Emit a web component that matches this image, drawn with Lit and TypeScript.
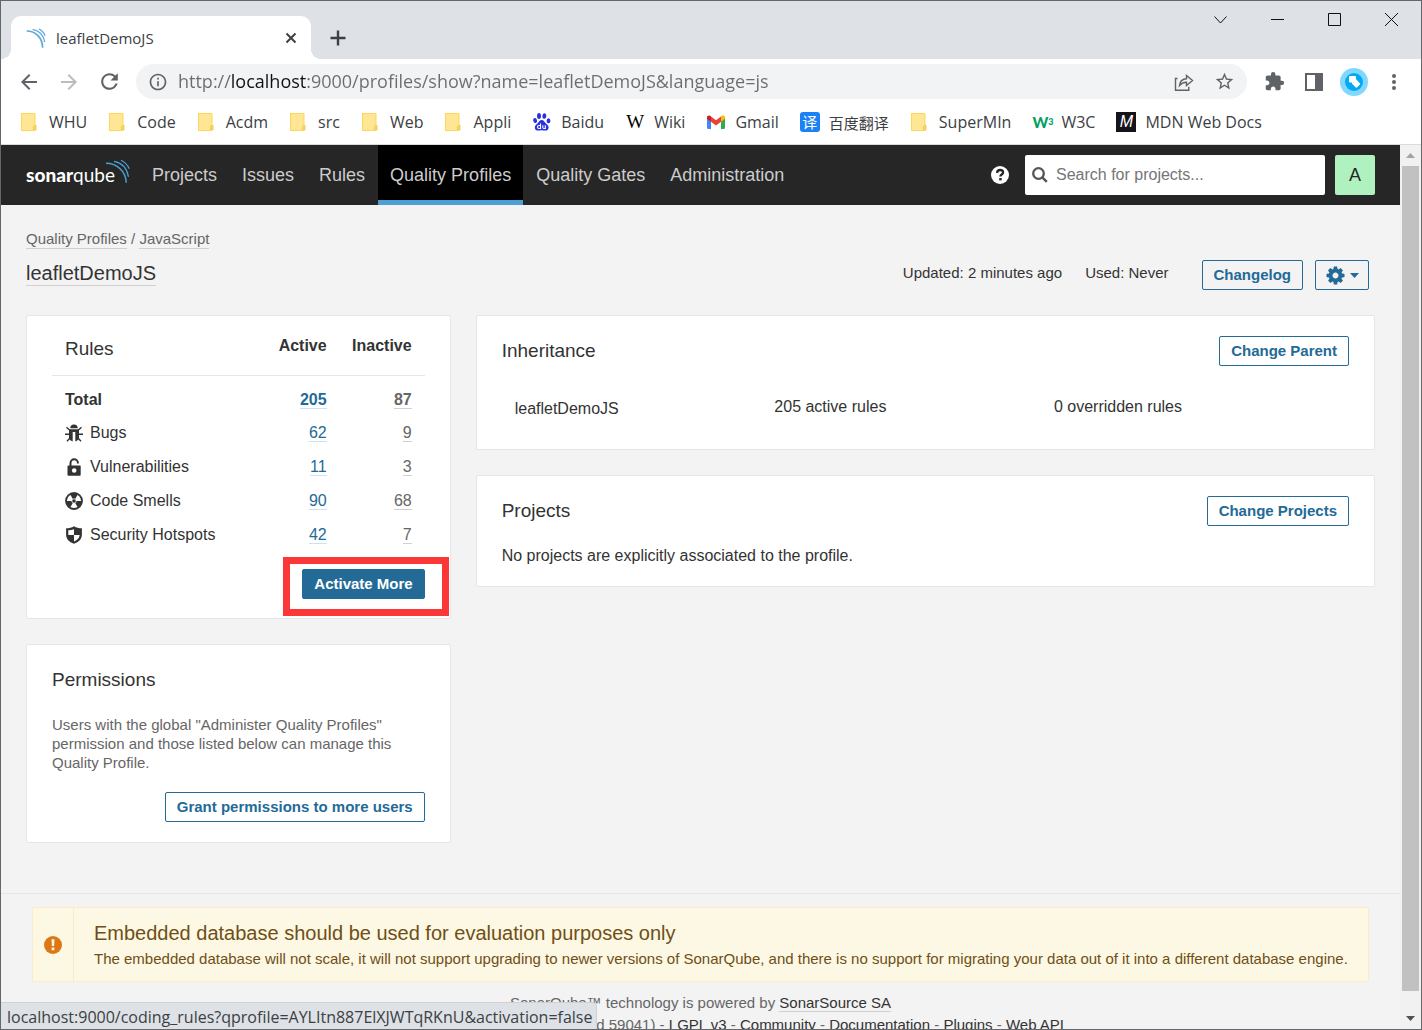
import { LitElement, html, css, svg, nothing, TemplateResult } from "lit";
import { customElement } from "lit/decorators.js";
import { classMap } from "lit/directives/class-map.js";

const folderIcon = svg`<svg width="20" height="20" viewBox="0 0 20 20" aria-hidden="true">
  <rect x="1" y="1" width="14" height="18" rx="1" fill="#ffe694"/>
  <path d="M1.500 2v16.500h12M1 1.500h14v12" fill="none" stroke="#fbd75b" />
  <path d="M14.500 13.500h1.500v4.500h-2.500v-3z" fill="#fbdc6c" stroke="#efc23c" stroke-width=".8"/>
</svg>`;

const baiduIcon = svg`<svg width="20" height="20" viewBox="0 0 20 20" aria-hidden="true">
  <g fill="#2932e1">
    <ellipse cx="7" cy="4" rx="2" ry="2.900"/><ellipse cx="12.300" cy="3.900" rx="2" ry="2.800" transform="rotate(8 12 4)"/>
    <ellipse cx="3" cy="8.500" rx="1.900" ry="2.600" transform="rotate(-15 3 8)"/><ellipse cx="16.500" cy="8.800" rx="1.900" ry="2.500"/>
    <path d="M9.700 8c2 0 2.600 1.600 3.800 2.900 1.300 1.400 3.300 2.500 3.100 4.800-.2 2.300-1.700 3-3.700 2.900-1.500-.1-2-.4-3.200-.4s-2 .4-3.400.4c-1.900 0-3.400-.8-3.500-2.900-.1-2.200 1.800-3.200 3.100-4.600C7.100 9.700 7.800 8 9.700 8z"/>
  </g>
  <path d="M8.500 11.500v5H7a1.500 1.500 0 0 1 0-3h1.500M10.800 13.300v2.300q0 .9 1 .9H13.300v-3.200" fill="none" stroke="#fff" stroke-width="1.100"/>
</svg>`;

const gmailIcon = svg`<svg width="20" height="20" viewBox="0 0 20 20" aria-hidden="true">
  <path d="M1 5.500v10.300c0 .7.500 1.200 1.200 1.200H5V8.500z" fill="#4285f4"/>
  <path d="M19 5.500v10.300c0 .7-.5 1.200-1.200 1.200H15V8.500z" fill="#34a853"/>
  <path d="M5 4.500v5.200l5 3.800 5-3.800V4.500l-5 3.800z" fill="#ea4335"/>
  <path d="M1 5.200v1.500l4 3V4.500l-.9-.7C2.800 2.900 1 3.700 1 5.200z" fill="#c5221f"/>
  <path d="M19 5.200v1.500l-4 3V4.500l.9-.7c1.300-.9 3.100-.1 3.100 1.400z" fill="#fbbc04"/>
</svg>`;

interface Bookmark { label: string; icon: unknown; cjk?: boolean; }

const bookmarks: Bookmark[] = [
  ...["WHU", "Code", "Acdm", "src", "Web", "Appli"].map((label) => ({ label, icon: folderIcon })),
  { label: "Baidu", icon: baiduIcon },
  { label: "Wiki", icon: html`<span class="mark wiki">W</span>` },
  { label: "Gmail", icon: gmailIcon },
  { label: "百度翻译", icon: html`<span class="mark fanyi">译</span>`, cjk: true },
  { label: "SuperMIn", icon: folderIcon },
  { label: "W3C", icon: html`<span class="mark w3">W<sup>3</sup></span>` },
  { label: "MDN Web Docs", icon: html`<span class="mark mdn">M</span>` },
];

const paths = {
  back: "M20 11H7.830l5.590-5.590L12 4l-8 8 8 8 1.410-1.410L7.830 13H20v-2z",
  forward: "M4 11h12.170l-5.590-5.590L12 4l8 8-8 8-1.410-1.410L16.170 13H4z",
  reload: "M17.650 6.350A7.958 7.958 0 0 0 12 4c-4.420 0-7.990 3.580-7.990 8s3.570 8 7.990 8c3.730 0 6.840-2.550 7.730-6h-2.080A5.990 5.990 0 0 1 12 18c-3.310 0-6-2.690-6-6s2.690-6 6-6c1.660 0 3.140.69 4.220 1.780L13 11h7V4l-2.350 2.350z",
  info: "M11 7h2v2h-2zm0 4h2v6h-2zm1-9C6.480 2 2 6.480 2 12s4.480 10 10 10 10-4.480 10-10S17.520 2 12 2zm0 18c-4.410 0-8-3.590-8-8s3.590-8 8-8 8 3.590 8 8-3.590 8-8 8z",
  star: "M22 9.240l-7.190-.62L12 2 9.190 8.630 2 9.240l5.460 4.730L5.820 21 12 17.270 18.180 21l-1.630-7.030L22 9.240zM12 15.400l-3.760 2.270 1-4.280-3.320-2.880 4.380-.38L12 6.100l1.710 4.040 4.380.38-3.320 2.880 1 4.280L12 15.400z",
  puzzle: "M20.500 11H19V7c0-1.100-.9-2-2-2h-4V3.500a2.500 2.500 0 0 0-5 0V5H4c-1.100 0-2 .9-2 2v3.800h1.500c1.500 0 2.700 1.200 2.700 2.700S5 16.200 3.500 16.200H2V20c0 1.100.9 2 2 2h3.800v-1.500c0-1.500 1.200-2.700 2.700-2.700s2.700 1.200 2.700 2.700V22H17c1.100 0 2-.9 2-2v-4h1.500a2.500 2.500 0 0 0 0-5z",
  panel: "M3 3h18v18H3zM5 5v14h8V5z",
  dots: "M12 8a2 2 0 1 0 0-4 2 2 0 0 0 0 4zm0 2a2 2 0 1 0 0 4 2 2 0 0 0 0-4zm0 6a2 2 0 1 0 0 4 2 2 0 0 0 0-4z",
};

const glyph = (d: string, size: number) => svg`<svg width=${size} height=${size} viewBox="0 0 24 24" aria-hidden="true">
  <path d=${d} fill="currentColor" fill-rule="evenodd"/></svg>`;

@customElement("browser-chrome")
export class BrowserChrome extends LitElement {
  static styles = css`
    :host { display: block; flex: none; font-family: "Open Sans", "Noto Sans CJK SC", sans-serif; color: #3c4043; background: #fff; }
    svg { display: block; flex: none; }
    button { display: grid; place-items: center; flex: none; margin: 0; padding: 0; border: 0; background: none; color: #5f6368; font: inherit; }
    .strip { display: flex; align-items: flex-end; height: 58px; padding-left: 10px; background: #dee1e6; }
    .tab { position: relative; display: flex; align-items: center; gap: 10px; box-sizing: border-box; width: 300px; height: 43px; padding: 0 10px 0 15px; border-radius: 10px 10px 0 0; background: #fff; }
    .tab::before, .tab::after { content: ""; position: absolute; bottom: 0; width: 10px; height: 10px; }
    .tab::before { left: -10px; background: radial-gradient(circle at 0 0, #dee1e6 10px, #fff 10px); }
    .tab::after { right: -10px; background: radial-gradient(circle at 100% 0, #dee1e6 10px, #fff 10px); }
    .title { flex: 1; font-size: 15px; }
    .close { width: 20px; height: 20px; color: #3c4043; }
    .add { width: 30px; height: 43px; margin-left: 12px; color: #3c4043; }
    .window { display: flex; align-self: flex-start; margin-left: auto; padding-right: 1px; }
    .window button { width: 57px; height: 37px; color: #111; }
    .toolbar { display: flex; align-items: center; height: 45px; padding: 0 7px 0 8px; }
    .toolbar button { width: 40px; height: 35px; }
    .toolbar .off { color: #babcbe; }
    .pill { display: flex; flex: 1; align-items: center; height: 35px; margin: 0 7px; padding: 0 3px 0 12px; border-radius: 18px; background: #f1f3f4; color: #5f6368; }
    .url { flex: 1; min-width: 0; height: 35px; margin-left: 10px; padding: 0; border: 0; outline: 0; font: 18px/35px "Open Sans", sans-serif; color: transparent; background: linear-gradient(90deg, #696d71 54px, #111 54px, #111 129px, #696d71 129px); -webkit-background-clip: text; background-clip: text; }
    .bookmarks { display: flex; align-items: center; gap: 21px; height: 41px; padding: 0 0 4px 19px; border-bottom: 1px solid #d9dbdd; box-sizing: border-box; }
    .bookmark { display: flex; align-items: center; gap: 9px; height: 36px; color: #3c4043; font-size: 16px; white-space: nowrap; text-decoration: none; }
    .bookmark .cjk { font-size: 15px; }
    .mark { display: grid; place-items: center; width: 20px; height: 20px; flex: none; }
    .wiki { font: 19px/20px "Liberation Serif", serif; color: #000; }
    .fanyi { border-radius: 3px; background: #1b82f5; color: #fff; font-size: 15px; line-height: 20px; }
    .w3 { display: flex; font: 900 15px/20px Lato, sans-serif; color: #04a064; }
    .w3 sup { font-size: 9px; line-height: 12px; }
    .mdn { background: #15141a; color: #fff; font: italic 16px/20px "Liberation Sans", sans-serif; }
  `;

  render() {
    return html`
      <div class="strip">
        <div class="tab">
          <svg width="20" height="20" viewBox="78 84 60 60" fill="none" stroke="#5ba8dc" aria-hidden="true">
            <path d="M80 93C107 93 127 113 128 143" stroke-width="5"/>
            <path d="M98 88C117 92 131 106 134 126" stroke-width="4"/>
            <path d="M117 87C125 91 132 98 135 107" stroke-width="4"/>
          </svg>
          <span class="title">leafletDemoJS</span>
          <button class="close" aria-label="Close tab">
            <svg width="12" height="12" viewBox="0 0 12 12"><path d="M1.500 1.500l9 9m0-9l-9 9" stroke="currentColor" stroke-width="2"/></svg>
          </button>
        </div>
        <button class="add" aria-label="New tab">
          <svg width="16" height="16" viewBox="0 0 16 16"><path d="M8 .5v15M.5 8h15" stroke="currentColor" stroke-width="2.400"/></svg>
        </button>
        <div class="window">
          <button aria-label="Search tabs"><svg width="13" height="13" viewBox="0 0 13 13"><path d="M.5 3.500l6 6.500 6-6.500" fill="none" stroke="currentColor"/></svg></button>
          <button aria-label="Minimize"><svg width="13" height="13" viewBox="0 0 13 13"><path d="M0 6.500h13" stroke="currentColor"/></svg></button>
          <button aria-label="Maximize"><svg width="13" height="13" viewBox="0 0 13 13"><path d="M.5.5h12v12H.5z" fill="none" stroke="currentColor"/></svg></button>
          <button aria-label="Close window"><svg width="13" height="13" viewBox="0 0 13 13"><path d="M0 0l13 13M13 0L0 13" stroke="currentColor"/></svg></button>
        </div>
      </div>
      <div class="toolbar">
        <button aria-label="Back">${glyph(paths.back, 24)}</button>
        <button class="off" aria-label="Forward">${glyph(paths.forward, 24)}</button>
        <button aria-label="Reload">${glyph(paths.reload, 25)}</button>
        <div class="pill">
          ${glyph(paths.info, 20)}
          <input class="url" aria-label="Address" .value=${"http://localhost:9000/profiles/show?name=leafletDemoJS&language=js"} />
          <button aria-label="Share">
            <svg width="20" height="20" viewBox="0 0 20 20" fill="none" stroke="currentColor" stroke-width="1.400">
              <path d="M3.500 6.500H1.500v11.800h13.300v-3.500M5.500 13.500c.5-4.500 3-6.500 7-6.700V3.500L18.500 8.500l-6 5v-3.300c-3-.1-5 .8-7 3.300z"/>
            </svg>
          </button>
          <button aria-label="Bookmark this page">${glyph(paths.star, 21)}</button>
        </div>
        <button aria-label="Extensions">${glyph(paths.puzzle, 21)}</button>
        <button aria-label="Side panel">${glyph(paths.panel, 24)}</button>
        <button aria-label="Profile">
          <svg width="28" height="28" viewBox="0 0 28 28"><circle cx="14" cy="14" r="14" fill="#80d8ff"/><circle cx="14" cy="14" r="9" fill="#03a9f4"/>
            <g fill="#fff"><rect x="9" y="8" width="7" height="6.500" rx="1"/><rect x="13" y="12" width="6" height="7" rx="1" transform="rotate(-42 16 15.500)"/></g></svg>
        </button>
        <button aria-label="Menu">${glyph(paths.dots, 24)}</button>
      </div>
      <nav class="bookmarks" aria-label="Bookmarks">
        ${bookmarks.map((b) => html`<a class="bookmark" href="#">${b.icon}<span class=${classMap({ cjk: !!b.cjk })}>${b.label}</span></a>`)}
      </nav>`;
  }
}

const bugIcon = svg`<svg width="18" height="18" viewBox="0 0 18 18" aria-hidden="true">
  <path d="M5.300 4.200a3.700 3.700 0 0 1 7.400 0z" fill="#333"/>
  <path d="M4 5.200h10v8.300c0 2-1.500 3.300-3.700 3.900V8H7.700v9.400C5.500 16.800 4 15.500 4 13.500z" fill="#333"/>
  <path d="M1.500 3.200l3.300 3M16.500 3.200l-3.300 3M0 10.300h4.500M18 10.300h-4.500M2 17.300l3-3.300M16 17.300L13 14" stroke="#333" stroke-width="1.400"/>
</svg>`;
const lockIcon = svg`<svg width="18" height="18" viewBox="0 0 18 18" aria-hidden="true">
  <path d="M5.500 8V5a3.700 3.700 0 0 1 7.400 0v.6" fill="none" stroke="#333" stroke-width="2"/>
  <path d="M3.500 7.500h11.200a1 1 0 0 1 1 1v8.200a1 1 0 0 1-1 1H3.500a1 1 0 0 1-1-1V8.500a1 1 0 0 1 1-1z" fill="#333"/>
  <circle cx="9.200" cy="12.500" r="2.300" fill="#fff"/>
</svg>`;
const smellIcon = svg`<svg width="18" height="18" viewBox="0 0 18 18" aria-hidden="true">
  <circle cx="9" cy="9" r="8" fill="#fff" stroke="#333" stroke-width="1.800"/>
  <path d="M9 9L5.200 2.400a7.600 7.600 0 0 1 7.600 0zM9 9H1.400a7.600 7.600 0 0 0 3.800 6.600zM9 9h7.600a7.600 7.600 0 0 1-3.800 6.600z" fill="#333" transform="rotate(180 9 9)" opacity="0"/>
  <path d="M9 9L5.200 2.400a7.600 7.600 0 0 1 7.600 0zM9 9H1.400a7.600 7.600 0 0 0 3.800 6.600zM9 9h7.600a7.600 7.600 0 0 1-3.800 6.600z" fill="#333"/>
  <circle cx="9" cy="9" r="2.200" fill="#333" stroke="#fff" stroke-width=".8"/>
</svg>`;
const shieldIcon = svg`<svg width="18" height="18" viewBox="0 0 18 18" aria-hidden="true">
  <path d="M9 .3c2.300 1.400 4.800 2 7.900 2v6.200c0 4.400-3 7.700-7.900 9.300-4.900-1.600-7.900-4.900-7.900-9.300V2.300c3.100 0 5.600-.6 7.900-2z" fill="#333"/>
  <path d="M9 3.200V9H3.300V4.300C5.500 4.100 7.300 3.800 9 3.200zM9 9h5.700c-.3 2.900-2.200 5-5.700 6.400z" fill="#fff"/>
</svg>`;

interface RuleRow { label: string; icon?: unknown; active: number; inactive: number; total?: boolean; }

const ruleRows: RuleRow[] = [
  { label: "Total", active: 205, inactive: 87, total: true },
  { label: "Bugs", icon: bugIcon, active: 62, inactive: 9 },
  { label: "Vulnerabilities", icon: lockIcon, active: 11, inactive: 3 },
  { label: "Code Smells", icon: smellIcon, active: 90, inactive: 68 },
  { label: "Security Hotspots", icon: shieldIcon, active: 42, inactive: 7 },
];

const navItems = ["Projects", "Issues", "Rules", "Quality Profiles", "Quality Gates", "Administration"];

const cog = "M1152 896q0-106-75-181t-181-75-181 75-75 181 75 181 181 75 181-75 75-181zm512-109v222q0 12-8 23t-20 13l-185 28q-19 54-39 91 35 50 107 138 10 12 10 25t-9 23q-27 37-99 108t-94 71q-12 0-26-9l-138-108q-44 23-91 38-16 136-29 186-7 28-36 28h-222q-14 0-24.500-8.500t-11.500-21.500l-28-184q-49-16-90-37l-141 107q-10 9-25 9-14 0-25-11-126-114-165-168-7-10-7-23 0-12 8-23 15-21 51-66.500t54-70.500q-27-50-41-99l-183-27q-13-2-21-12.500t-8-23.500v-222q0-12 8-23t19-13l186-28q14-46 39-92-40-57-107-138-10-12-10-24 0-10 9-23 26-36 98.500-107.500t94.500-71.500q13 0 26 10l138 107q44-23 91-38 16-136 29-186 7-28 36-28h222q14 0 24.500 8.500t11.500 21.500l28 184q49 16 90 37l142-107q9-9 24-9 13 0 25 10 129 119 165 170 7 8 7 22 0 12-8 23-15 21-51 66.500t-54 70.500q26 50 41 98l183 28q13 2 21 12.500t8 23.500z";

@customElement("profile-page")
export class ProfilePage extends LitElement {
  static styles = css`
    :host { display: block; font: 16px/20px "Liberation Sans", Arial, sans-serif; color: #333; background: #f3f3f3; }
    h1, h2, p { margin: 0; font-weight: 400; }
    svg { display: block; flex: none; }
    .nav { display: flex; align-items: center; height: 60px; padding: 0 25px 0 24px; background: #262626; }
    .logo { margin-right: 8px; }
    .logo text { font-family: Lato, sans-serif; font-size: 19px; fill: #fff; }
    .logo .heavy { font-weight: 900; }
    .menu { display: flex; gap: 1px; align-self: stretch; }
    .menu a { box-sizing: border-box; padding: 0 12px; border-bottom: 5px solid transparent; color: #ccc; font-size: 18px; line-height: 60px; height: 60px; text-decoration: none; white-space: nowrap; }
    .menu a.current { background: #000; border-color: #4b9fd5; }
    .help { display: block; margin: 0 16px 0 auto; padding: 0; border: 0; background: none; }
    .search { display: flex; align-items: center; gap: 8px; box-sizing: border-box; width: 300px; height: 40px; padding: 0 8px 0 7px; margin-right: 10px; border-radius: 2px; background: #fff; }
    .search input { flex: 1; min-width: 0; border: 0; padding: 0; outline: 0; background: none; color: #333; font: 16px/20px "Liberation Sans", Arial, sans-serif; }
    .search input::placeholder { color: #757575; opacity: 1; }
    .avatar { width: 40px; height: 40px; padding: 0; border: 0; border-radius: 2px; background: #b0f1c0; color: #262626; font: 18px/40px "Liberation Sans", Arial, sans-serif; }
    .page { padding: 25px; }
    .crumbs { font-size: 15px; line-height: 18px; color: #666; }
    .crumbs a, .name { display: inline-block; color: inherit; text-decoration: none; border-bottom: 1px solid #d0d0d0; }
    .head { display: flex; justify-content: space-between; align-items: flex-start; margin: 6px 0 25px; }
    .head h1 { padding-top: 6px; font-size: 20px; line-height: 24px; }
    .facts { display: flex; gap: 12px; padding: 5px 6px 0 0; font-size: 15px; line-height: 26px; }
    .facts .used { margin: 0 21px 0 11px; }
    .btn { box-sizing: border-box; height: 30px; padding: 0 11px; border: 1px solid #236a97; border-radius: 2px; background: transparent; color: #236a97; font: bold 15px/28px "Liberation Sans", Arial, sans-serif; white-space: nowrap; }
    .btn.solid { background: #236a97; color: #fff; }
    .gear { display: flex; align-items: center; gap: 4px; padding: 0 9px; }
    .columns { display: grid; grid-template-columns: 17fr 36fr; gap: 25px; align-items: start; }
    .column { display: grid; gap: 25px; }
    .card { padding: 20px 25px; border: 1px solid #e6e6e6; border-radius: 2px; background: #fff; }
    .card h2 { font-size: 19px; line-height: 30px; }
    .bar { display: flex; justify-content: space-between; align-items: center; }
    .right { display: flex; justify-content: flex-end; }
    table { width: 100%; border-collapse: collapse; }
    th, td { padding: 0; text-align: left; }
    .rules-card { padding: 15px 25px 19px; }
    .rules th, .rules td { padding: 0 13px; }
    .rules thead th { box-sizing: border-box; height: 44px; padding-top: 5px; border-bottom: 1px solid #e6e6e6; line-height: 20px; vertical-align: top; }
    .rules thead th:first-child { padding-top: 3px; }
    .rules .num { box-sizing: border-box; width: 85px; text-align: right; padding-left: 0; }
    .rules tbody tr { height: 34px; }
    .rules tbody tr:first-child { height: 41px; }
    .rules tbody tr:first-child > * { padding-top: 8px; }
    .rules tbody th { font-weight: 400; }
    .label { display: flex; align-items: center; gap: 7px; white-space: nowrap; }
    .rules .total th, .rules .total td { font-weight: 700; }
    .rules td a { display: inline-block; color: #236a97; line-height: 17px; text-decoration: none; border-bottom: 1px solid #cae3f2; }
    .rules td a.muted { color: #666; border-color: #d0d0d0; }
    .activate { position: relative; margin-top: 17px; }
    .callout { position: absolute; inset: -12px -24px -17px -19px; border: 7px solid #fb3737; pointer-events: none; }
    .permissions p { margin: 20px 0 20px; color: #666; font-size: 15px; line-height: 19px; }
    .inherit td { box-sizing: border-box; padding: 29px 0 8px 10px; }
    .inherit .c1 { width: 31%; padding-top: 33px; padding-left: 13px; }
    .inherit .c2 { width: 33%; }
    .inherit-card { padding-bottom: 22px; }
    .none { padding-top: 20px; }
    .footer { margin-top: 25px; padding: 13px 31px; border-top: 1px solid #e6e6e6; color: #666; font-size: 15px; line-height: 19px; text-align: center; }
    .footer a { color: #333; text-decoration: none; border-bottom: 1px solid #d0d0d0; }
    .footer p { margin-bottom: 3px; white-space: nowrap; }
    .alert { display: flex; margin-bottom: 11px; border: 1px solid #faebcc; border-radius: 2px; background: #fcf8e3; color: #6f4f17; text-align: left; }
    .alert-icon { display: grid; place-items: center; width: 40px; border-right: 1px solid #faebcc; }
    .alert-body { padding: 13px 20px; }
    .alert h2 { font-size: 20px; line-height: 25px; }
    .alert .detail { margin: 4px 0 0; line-height: 18px; }
  `;

  private ruleRow(row: RuleRow): TemplateResult {
    return html`<tr class=${classMap({ total: !!row.total })}>
      <th scope="row"><span class="label">${row.icon ?? nothing}${row.label}</span></th>
      <td class="num"><a href="#">${row.active}</a></td>
      <td class="num"><a class="muted" href="#">${row.inactive}</a></td>
    </tr>`;
  }

  render() {
    return html`
      <header class="nav">
        <a class="logo" href="#" aria-label="SonarQube home">
          <svg width="107" height="34" viewBox="0 0 107 34">
            <text x="1" y="24"><tspan class="heavy">sonar</tspan><tspan>qube</tspan></text>
            <g fill="none" stroke="#4b9fd5">
              <path d="M81 5.300c11 0 20 8 20.200 19.500" stroke-width="1.500"/>
              <path d="M89 3.300c7.500 1.300 13 7 14.500 15.500" stroke-width="1.200"/>
              <path d="M96 2.300c4 2 6.800 5 8.300 8.500" stroke-width="1.200"/>
            </g>
          </svg>
        </a>
        <nav class="menu" aria-label="Main">
          ${navItems.map((n) => html`<a href="#" class=${classMap({ current: n === "Quality Profiles" })}>${n}</a>`)}
        </nav>
        <button class="help" aria-label="Help">
          <svg width="18" height="18" viewBox="0 0 18 18"><circle cx="9" cy="9" r="9" fill="#fff"/>
            <path d="M6 6.800C6.200 4.800 7.500 4 9.100 4c1.800 0 3 1 3 2.500 0 2.100-2.700 2-2.700 4" fill="none" stroke="#262626" stroke-width="2.300"/>
            <path d="M8.200 12h2.500v2.400H8.200z" fill="#262626"/></svg>
        </button>
        <label class="search">
          <svg width="16" height="16" viewBox="0 0 16 16" fill="none" stroke="#555" aria-hidden="true"><circle cx="6.500" cy="6.500" r="5.300" stroke-width="2.300"/><path d="M10.300 10.300l4.500 4.500" stroke-width="2.500"/></svg>
          <input type="search" placeholder="Search for projects..." aria-label="Search for projects" />
        </label>
        <button class="avatar" aria-label="Account">A</button>
      </header>

      <main class="page">
        <div class="crumbs"><a href="#">Quality Profiles</a> / <a href="#">JavaScript</a></div>
        <div class="head">
          <h1><a class="name" href="#">leafletDemoJS</a></h1>
          <div class="facts">
            <span>Updated: 2 minutes ago</span>
            <span class="used">Used: Never</span>
            <button class="btn">Changelog</button>
            <button class="btn gear" aria-label="Profile actions">
              <svg width="21" height="21" viewBox="0 0 1792 1792"><path d=${cog} fill="currentColor"/></svg>
              <svg width="9" height="5" viewBox="0 0 9 5"><path d="M0 0h9L4.500 5z" fill="currentColor"/></svg>
            </button>
          </div>
        </div>

        <div class="columns">
          <div class="column">
            <section class="card rules-card">
              <table class="rules">
                <thead><tr><th scope="col"><h2>Rules</h2></th><th scope="col" class="num">Active</th><th scope="col" class="num">Inactive</th></tr></thead>
                <tbody>${ruleRows.map((r) => this.ruleRow(r))}</tbody>
              </table>
              <div class="right"><div class="activate"><button class="btn solid">Activate More</button><span class="callout"></span></div></div>
            </section>
            <section class="card permissions">
              <h2>Permissions</h2>
              <p>Users with the global "Administer Quality Profiles" permission and those listed below can manage this Quality Profile.</p>
              <div class="right"><button class="btn">Grant permissions to more users</button></div>
            </section>
          </div>
          <div class="column">
            <section class="card inherit-card">
              <div class="bar"><h2>Inheritance</h2><button class="btn">Change Parent</button></div>
              <table class="inherit"><tbody><tr><td class="c1">leafletDemoJS</td><td class="c2">205 active rules</td><td>0 overridden rules</td></tr></tbody></table>
            </section>
            <section class="card">
              <div class="bar"><h2>Projects</h2><button class="btn">Change Projects</button></div>
              <p class="none">No projects are explicitly associated to the profile.</p>
            </section>
          </div>
        </div>
      </main>

      <footer class="footer">
        <div class="alert" role="alert">
          <div class="alert-icon"><svg width="18" height="18" viewBox="0 0 18 18"><circle cx="9" cy="9" r="9" fill="#dd7715"/><path d="M7.500 3.200h3l-.4 6.800H7.900zM7.600 11.500h2.800v2.800H7.600z" fill="#fcf8e3"/></svg></div>
          <div class="alert-body">
            <h2>Embedded database should be used for evaluation purposes only</h2>
            <p class="detail">The embedded database will not scale, it will not support upgrading to newer versions of SonarQube, and there is no support for migrating your data out of it into a different database engine.</p>
          </div>
        </div>
        <p>SonarQube™ technology is powered by <a href="#">SonarSource SA</a></p>
        <p>Community Edition - Version 9.6.1 (build 59041) - <a href="#">LGPL v3</a> - <a href="#">Community</a> - <a href="#">Documentation</a> - <a href="#">Plugins</a> - <a href="#">Web API</a></p>
      </footer>`;
  }
}

@customElement("app-root")
export class AppRoot extends LitElement {
  static styles = css`
    :host { position: relative; display: flex; flex-direction: column; box-sizing: border-box; height: 100vh; overflow: hidden; border: 1px solid #66676a; background: #f3f3f3; }
    .view { display: flex; flex: 1; min-height: 0; }
    .scroll { flex: 1; min-width: 0; overflow: hidden; }
    .track { display: flex; flex-direction: column; align-items: center; width: 21px; background: #f1f1f1; }
    .arrow { display: block; flex: none; padding: 8px 0; }
    .thumb { flex: 1; width: 17px; background: #c1c1c1; }
    .rest { height: 17px; }
    .status { position: absolute; left: -1px; bottom: -1px; box-sizing: border-box; height: 28px; padding: 0 4px 0 7px; border: 1px solid #cfd1d4; border-width: 1px 1px 0 0; border-radius: 0 5px 0 0; background: #dee1e6; color: #3c4043; font: 16px/28px "Open Sans", sans-serif; white-space: nowrap; }
  `;

  render() {
    return html`
      <browser-chrome></browser-chrome>
      <div class="view">
        <div class="scroll"><profile-page></profile-page></div>
        <div class="track" aria-hidden="true">
          <svg class="arrow" width="9" height="5" viewBox="0 0 9 5"><path d="M0 5h9L4.500 0z" fill="#a3a3a3"/></svg>
          <div class="thumb"></div>
          <div class="rest"></div>
          <svg class="arrow" width="9" height="5" viewBox="0 0 9 5"><path d="M0 0h9L4.500 5z" fill="#505050"/></svg>
        </div>
      </div>
      <div class="status">localhost:9000/coding_rules?qprofile=AYLItn887ElXJWTqRKnU&amp;activation=false</div>`;
  }
}
